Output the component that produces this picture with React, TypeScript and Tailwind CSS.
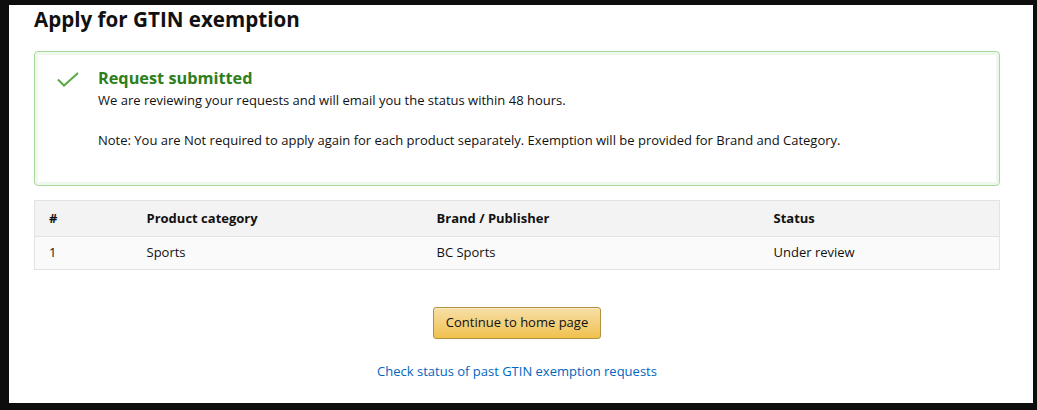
export default function App() {
  const rows = [{ n: '1', category: 'Sports', brand: 'BC Sports', status: 'Under review' }];

  return (
    <div className="w-[1037px] h-[410px] bg-[#0d0d0d] pl-[9px] pt-[5px] pr-[4px] pb-[7px] font-['Open_Sans',sans-serif] text-[#111]">
      <div className="h-full bg-white pl-[25px] pr-[33px]">
        <h1 className="pt-[1px] text-[20.6px] leading-[26px] font-bold text-[#111]">Apply for GTIN exemption</h1>

        <div className="mt-[19px] h-[135px] rounded-[4px] border border-[#a6d99b] shadow-[inset_0_0_0_3px_#eef8ec] pl-[22px] pt-[15px]">
          <div className="flex">
            <svg width="22" height="16" viewBox="0 0 22 16" className="mt-[5px] shrink-0">
              <path d="M1 7.5 L7 13.5 L21 1" fill="none" stroke="#5aa949" strokeWidth="2" />
            </svg>
            <div className="ml-[19px]">
              <div className="text-[16.3px] leading-[22px] font-bold text-[#2f7e1c]">Request submitted</div>
              <p className="mt-[2px] text-[13px] leading-[18px]">
                We are reviewing your requests and will email you the status within 48 hours.
              </p>
              <p className="mt-[22px] text-[13px] leading-[18px]">
                Note: You are Not required to apply again for each product separately. Exemption will be provided for Brand and Category.
              </p>
            </div>
          </div>
        </div>

        <table className="mt-[14px] w-full border-collapse text-[13px]">
          <thead>
            <tr className="h-[36px] bg-[#f3f3f3] border border-[#e3e3e3]">
              <th className="w-[112px] pl-[14px] text-left font-bold">#</th>
              <th className="w-[290px] text-left font-bold">Product category</th>
              <th className="w-[337px] text-left font-bold">Brand / Publisher</th>
              <th className="text-left font-bold">Status</th>
            </tr>
          </thead>
          <tbody>
            {rows.map((r) => (
              <tr key={r.n} className="h-[33px] bg-[#fafafa] border border-[#e3e3e3]">
                <td className="pl-[14px]">{r.n}</td>
                <td>{r.category}</td>
                <td>{r.brand}</td>
                <td>{r.status}</td>
              </tr>
            ))}
          </tbody>
        </table>

        <div className="mt-[37px] flex flex-col items-center">
          <button className="h-[32px] w-[168px] rounded-[3px] border border-[#b1903f] bg-gradient-to-b from-[#f7dfa5] to-[#f0c14b] text-[13px] text-[#111] shadow-[inset_0_1px_0_rgba(255,255,255,0.4)]">
            Continue to home page
          </button>
          <a href="#" className="mt-[23px] text-[13px] text-[#0066c0]">
            Check status of past GTIN exemption requests
          </a>
        </div>
      </div>
    </div>
  );
}
